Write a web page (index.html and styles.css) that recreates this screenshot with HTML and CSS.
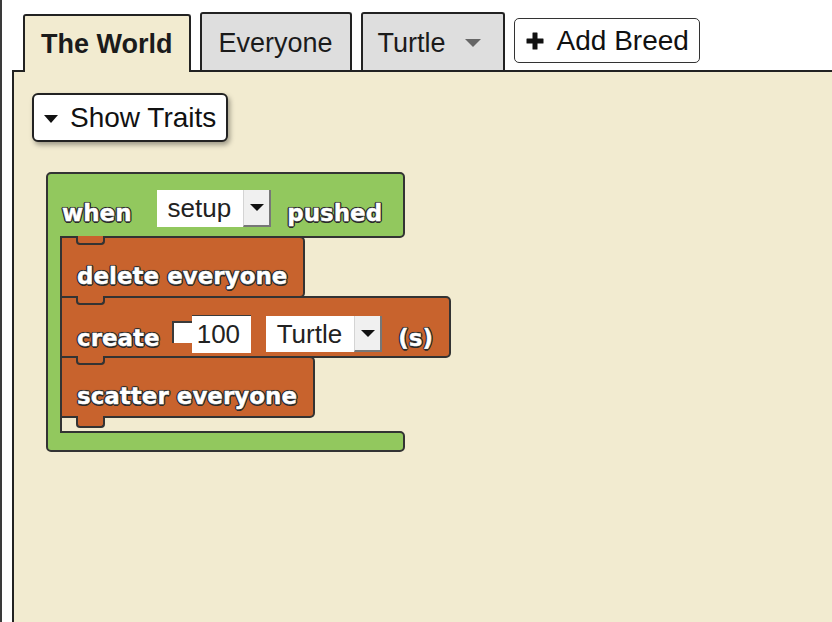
FILE: index.html
```html
<!DOCTYPE html>
<html lang="en">
<head>
  <meta charset="UTF-8">
  <title>The World</title>
  <meta name="viewport" content="width=device-width, initial-scale=1.0">
  <link rel="stylesheet" href="styles.css">
</head>
<body>
  <div class="app">
    <nav class="tabbar">
      <div class="tab active">The World</div>
      <div class="tab">Everyone</div>
      <div class="tab breed">Turtle <span class="caret"></span></div>
      <button class="add-breed">
        <svg width="20" height="20" viewBox="0 0 20 20"><path d="M8 1.5h4a.5.5 0 0 1 .5.5v5.5H18a.5.5 0 0 1 .5.5v4a.5.5 0 0 1-.5.5h-5.5V18a.5.5 0 0 1-.5.5H8a.5.5 0 0 1-.5-.5v-5.5H2a.5.5 0 0 1-.5-.5V8a.5.5 0 0 1 .5-.5h5.5V2a.5.5 0 0 1 .5-.5z" fill="#111"/></svg>
        Add Breed
      </button>
    </nav>

    <main class="workspace">
      <button class="traits-toggle"><span class="tri"></span>Show Traits</button>

      <div class="block-group">
        <div class="hat">
          <span class="label">when</span>
          <span class="dropdown first"><span class="dd-value">setup</span><span class="dd-btn"><span class="arrow"></span></span></span>
          <span class="label">pushed</span>
        </div>
        <div class="hat-body">
          <div class="spine"></div>
          <div class="stack">
            <div class="stmt"><span class="label">delete everyone</span></div>
            <div class="stmt create">
              <span class="label">create</span>
              <span class="num"><span class="num-tab"></span><span class="num-value">100</span></span>
              <span class="dropdown"><span class="dd-value">Turtle</span><span class="dd-btn"><span class="arrow"></span></span></span>
              <span class="label">(s)</span>
            </div>
            <div class="stmt last"><span class="label">scatter everyone</span></div>
          </div>
        </div>
        <div class="hat-foot"></div>
      </div>
    </main>
  </div>
</body>
</html>
```

FILE: styles.css
```css
html, body {
  height: 100%;
}
body {
  margin: 0;
  background-color: #ffffff;
  font-family: "Liberation Sans", Arial, sans-serif;
  color: #1b1b1b;
  overflow: hidden;
  border-left: 2px solid #3a3a3a;
  box-sizing: border-box;
}
.app {
  margin-left: 10px;
  height: 100%;
  display: flex;
  flex-direction: column;
}

/* tabs */
.tabbar {
  display: flex;
  align-items: flex-end;
  flex-shrink: 0;
  height: 72px;
  box-sizing: border-box;
  border-bottom: 2px solid #222;
  padding-left: 11px;
}
.tab {
  display: flex;
  align-items: center;
  box-sizing: border-box;
  height: 58px;
  padding: 14px 17px 12px;
  margin-right: 9px;
  border: 2px solid #222;
  border-bottom: none;
  border-radius: 3px 3px 0 0;
  background-color: #dedede;
  font-size: 27px;
  line-height: 30px;
  white-space: nowrap;
}
.tab.active {
  background-color: #f2ebd0;
  font-weight: bold;
  padding: 13px 16px;
  margin-bottom: -2px;
}
.tab.breed {
  padding: 14px 22px 12px 15px;
}
.caret {
  width: 0;
  height: 0;
  margin-left: 19px;
  border-left: 8px solid transparent;
  border-right: 8px solid transparent;
  border-top: 8px solid #666;
}
.add-breed {
  display: flex;
  align-items: center;
  box-sizing: border-box;
  height: 45px;
  margin-bottom: 7px;
  padding: 0 10px;
  border: 1.5px solid #333;
  border-radius: 5px;
  background-color: #ffffff;
  font-family: "Liberation Sans", Arial, sans-serif;
  font-size: 28px;
  line-height: 30px;
  color: #111;
  white-space: nowrap;
}
.add-breed svg {
  margin-right: 12px;
}

/* workspace */
.workspace {
  flex: 1;
  background-color: #f2ebd0;
  border-left: 2px solid #222;
  padding: 21px 0 0 18px;
}
.traits-toggle {
  display: flex;
  align-items: center;
  width: fit-content;
  box-sizing: border-box;
  height: 49px;
  padding: 0 10px;
  border: 2px solid #222;
  border-radius: 6px;
  background-color: #ffffff;
  box-shadow: 2px 3px 5px rgba(0,0,0,0.35);
  font-family: "Liberation Sans", Arial, sans-serif;
  font-size: 28px;
  line-height: 30px;
  color: #111;
}
.traits-toggle .tri {
  width: 0;
  height: 0;
  margin: 3px 12px 0 0;
  border-left: 7px solid transparent;
  border-right: 7px solid transparent;
  border-top: 8px solid #111;
}

/* blocks */
.block-group {
  display: flex;
  flex-direction: column;
  align-items: flex-start;
  margin: 30px 0 0 14px;
}
.label {
  color: #ffffff;
  font-family: "DejaVu Sans", sans-serif;
  font-weight: bold;
  font-size: 23px;
  line-height: 27px;
  white-space: nowrap;
  -webkit-text-stroke: 0.4px #ffffff;
  text-shadow: 1.5px 0 0 #2a2a2a, -1.5px 0 0 #2a2a2a, 0 1.5px 0 #2a2a2a, 0 -1.5px 0 #2a2a2a,
    1px 1px 0 #2a2a2a, -1px -1px 0 #2a2a2a, 1px -1px 0 #2a2a2a, -1px 1px 0 #2a2a2a, 0 0 2px #2a2a2a;
}
.hat {
  display: flex;
  align-items: flex-start;
  width: 359px;
  height: 66px;
  box-sizing: border-box;
  padding: 16px 0 0 14px;
  background-color: #92c85e;
  border: 2px solid #333;
  border-radius: 5px 5px 5px 0;
}
.hat .label {
  margin-top: 10px;
}
.hat .dropdown {
  margin: 0 16px 0 25px;
}
.hat-body {
  display: flex;
  margin-top: -2px;
  position: relative;
  z-index: 1;
}
.spine {
  flex-shrink: 0;
  width: 16px;
  box-sizing: border-box;
  background-color: #92c85e;
  border-left: 2px solid #333;
  border-right: 2px solid #333;
}
.stack {
  display: flex;
  flex-direction: column;
  align-items: flex-start;
  padding-bottom: 15px;
}
.stmt {
  position: relative;
  display: flex;
  align-items: flex-start;
  box-sizing: border-box;
  height: 62px;
  padding: 25px 16px 0 15px;
  background-color: #c8632d;
  border: 2px solid #333;
  border-left: none;
  border-radius: 0 5px 5px 0;
}
.stmt + .stmt {
  margin-top: -2px;
}
.stmt::before {
  content: "";
  position: absolute;
  left: 14px;
  top: -2px;
  width: 25px;
  height: 7px;
  background-color: #c8632d;
  border: 2px solid #333;
  border-top: none;
  border-radius: 0 0 4px 4px;
}
.stmt.last::after {
  content: "";
  position: absolute;
  left: 14px;
  bottom: -12px;
  width: 25px;
  height: 10px;
  background-color: #c8632d;
  border: 2px solid #333;
  border-top: none;
  border-radius: 0 0 4px 4px;
}
.stmt.create {
  padding-top: 17px;
}
.stmt.create .label {
  margin-top: 10px;
}
.hat-foot {
  width: 359px;
  height: 21px;
  box-sizing: border-box;
  margin-top: -2px;
  background-color: #92c85e;
  border: 2px solid #333;
  border-radius: 0 5px 5px 5px;
}

/* fields */
.dropdown {
  display: flex;
  height: 37px;
  background-color: #ffffff;
  font-family: "Liberation Sans", Arial, sans-serif;
  font-size: 26px;
  line-height: 37px;
  color: #222;
}
.stmt .dropdown {
  height: 36px;
  line-height: 36px;
  margin: 1px 16px 0 0;
}
.dd-value {
  padding: 0 12px 0 11px;
}
.dd-btn {
  display: flex;
  align-items: center;
  justify-content: center;
  width: 28px;
  box-sizing: border-box;
  background-color: #f0f0f0;
  border-left: 1px solid #d4d4d4;
  border-right: 2px solid #777;
  border-bottom: 2px solid #777;
}
.dd-btn .arrow {
  width: 0;
  height: 0;
  border-left: 7px solid transparent;
  border-right: 7px solid transparent;
  border-top: 7px solid #111;
}
.num {
  display: flex;
  align-items: flex-start;
  margin: 0 15px 0 12px;
}
.num-tab {
  width: 20px;
  height: 22px;
  box-sizing: border-box;
  margin-top: 6px;
  background-color: #ffffff;
  border-top: 2px solid #3a3a3a;
  border-left: 2px solid #3a3a3a;
}
.num-value {
  width: 59px;
  height: 38px;
  box-sizing: border-box;
  padding-left: 5px;
  background-color: #ffffff;
  border-top: 1px solid #3a3a3a;
  font-family: "Liberation Sans", Arial, sans-serif;
  font-size: 26px;
  line-height: 37px;
  color: #222;
}
```
